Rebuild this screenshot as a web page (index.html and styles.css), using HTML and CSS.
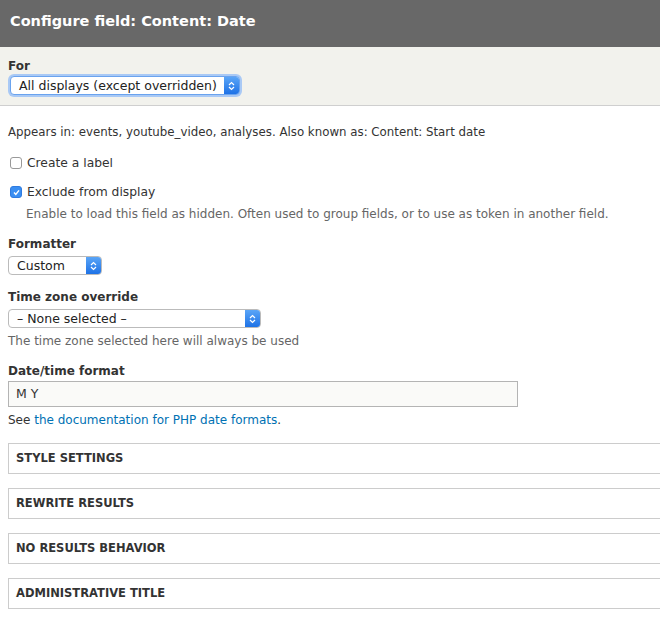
FILE: index.html
```html
<!DOCTYPE html>
<html>
<head>
<meta charset="utf-8">
<link rel="stylesheet" href="styles.css">
</head>
<body>
<div class="page">
  <header class="titlebar"><h1>Configure field: Content: Date</h1></header>
  <div class="for-area">
    <div class="label">For</div>
    <div class="select focus w-for"><span class="select-text">All displays (except overridden)</span><span class="arrow"><svg width="7" height="10" viewBox="0 0 7 10"><path d="M1 4 L3.5 1.5 L6 4 M1 6 L3.5 8.5 L6 6" fill="none" stroke="#fff" stroke-width="1.2"/></svg></span></div>
  </div>
  <main class="content">
    <p class="info">Appears in: events, youtube_video, analyses. Also known as: Content: Start date</p>
    <div class="check-row"><span class="checkbox"></span><span>Create a label</span></div>
    <div class="check-row check-row-2"><span class="checkbox checked"><svg width="9" height="9" viewBox="0 0 9 9"><path d="M2 4.6 L3.8 6.5 L7 2.3" fill="none" stroke="#fff" stroke-width="1.4"/></svg></span><span>Exclude from display</span></div>
    <p class="desc desc-check">Enable to load this field as hidden. Often used to group fields, or to use as token in another field.</p>

    <div class="label mt-formatter">Formatter</div>
    <div class="select w-custom"><span class="select-text">Custom</span><span class="arrow"><svg width="7" height="10" viewBox="0 0 7 10"><path d="M1 4 L3.5 1.5 L6 4 M1 6 L3.5 8.5 L6 6" fill="none" stroke="#fff" stroke-width="1.2"/></svg></span></div>

    <div class="label mt-tz">Time zone override</div>
    <div class="select w-tz"><span class="select-text">– None selected –</span><span class="arrow"><svg width="7" height="10" viewBox="0 0 7 10"><path d="M1 4 L3.5 1.5 L6 4 M1 6 L3.5 8.5 L6 6" fill="none" stroke="#fff" stroke-width="1.2"/></svg></span></div>
    <p class="desc desc-tz">The time zone selected here will always be used</p>

    <div class="label mt-fmt">Date/time format</div>
    <div class="textinput">M Y</div>
    <p class="see">See <a href="#">the documentation for PHP date formats</a>.</p>

    <div class="fieldsets">
      <section class="fieldset">STYLE SETTINGS</section>
      <section class="fieldset">REWRITE RESULTS</section>
      <section class="fieldset">NO RESULTS BEHAVIOR</section>
      <section class="fieldset">ADMINISTRATIVE TITLE</section>
    </div>
  </main>
</div>
</body>
</html>
```
FILE: styles.css
```css
* { box-sizing: border-box; }
html, body { margin: 0; padding: 0; background: #fff; }
body {
  font-family: "DejaVu Sans", "Liberation Sans", sans-serif;
  font-size: 11.8px;
  color: #333;
  overflow: hidden;
}
.page { width: 660px; overflow: hidden; }
.titlebar {
  background: #686868;
  height: 47px;
  padding: 11px 0 0 10px;
}
.titlebar h1 {
  margin: 0;
  color: #fff;
  font-size: 14.5px;
  line-height: 20px;
  font-weight: bold;
}
.for-area {
  background: #f2f2ed;
  height: 59px;
  border-bottom: 1px solid #cfcfcf;
  padding: 12px 8px 0;
}
.label {
  font-weight: bold;
  font-size: 12px;
  line-height: 14px;
  color: #333;
}
.select {
  display: flex;
  align-items: stretch;
  height: 19px;
  margin-top: 5px;
  background: #fff;
  border: 1px solid #bbb;
  border-radius: 4px;
  overflow: hidden;
}
.select.focus {
  border-color: #6aa3ee;
  box-shadow: 0 0 0 2px #a9c9f5;
  margin-left: 2px;
  margin-top: 3px;
}
.select-text {
  flex: 1;
  padding-left: 8px;
  line-height: 17px;
  font-size: 12.5px;
  color: #222;
  white-space: nowrap;
}
.arrow {
  width: 15px;
  background: linear-gradient(#5aa5f7, #1e72e6);
  display: flex;
  align-items: center;
  justify-content: center;
}
.w-for { width: 230px; }
.w-custom { width: 94px; }
.w-tz { width: 253px; }
.content { padding: 0 8px; }
.info { margin: 19px 0 0; line-height: 14px; }
.check-row {
  display: flex;
  align-items: center;
  margin-top: 17px;
  line-height: 14px;
  font-size: 12.3px;
}
.check-row-2 { margin-top: 15px; }
.checkbox {
  width: 12px;
  height: 12px;
  border: 1px solid #999;
  border-radius: 3px;
  margin: 0 5px 0 2px;
  background: #fff;
  display: flex;
  align-items: center;
  justify-content: center;
}
.checkbox.checked { background: #3a8ef2; border-color: #2f7be0; }
.desc { margin: 6px 0 0; color: #666; line-height: 14px; font-size: 12px; }
.desc-check { margin-top: 8px; padding-left: 18px; }
.mt-formatter { margin-top: 16px; }
.mt-tz { margin-top: 15px; }
.mt-fmt { margin-top: 16px; }
.textinput {
  width: 510px;
  height: 26px;
  margin-top: 3px;
  background: #fafaf8;
  border: 1px solid #b4b4b4;
  padding-left: 7px;
  line-height: 24px;
  font-size: 12.5px;
  color: #333;
}
.see { margin: 6px 0 0; line-height: 14px; font-size: 12px; }
.see a { color: #0071b3; text-decoration: none; }
.fieldsets { margin-top: 16px; margin-right: -20px; }
.fieldset {
  border: 1px solid #ccc;
  border-right: 0;
  height: 31px;
  padding: 0 7px;
  line-height: 29px;
  font-weight: bold;
  font-size: 11.5px;
  color: #333;
  margin-bottom: 14px;
}
```
